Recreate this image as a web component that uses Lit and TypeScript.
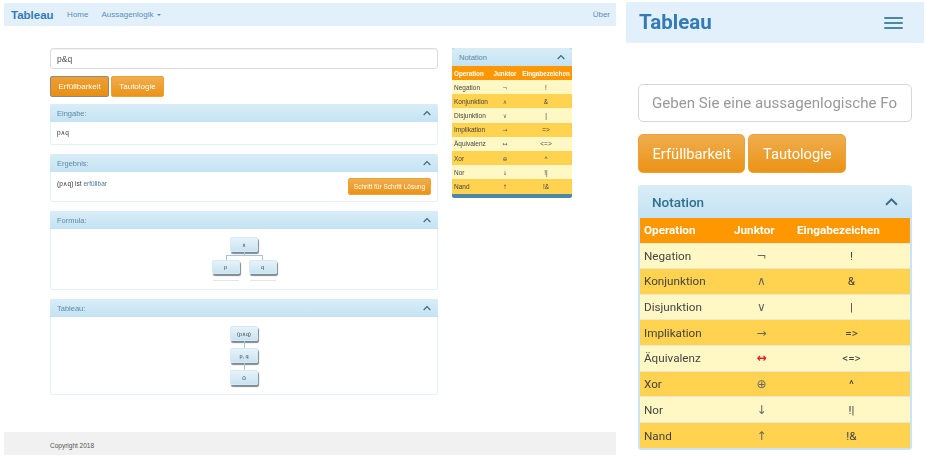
import { LitElement, html, css } from 'lit';
import { customElement } from 'lit/decorators.js';

const NOTATION = [
  ['Negation', '¬', '!'],
  ['Konjunktion', '∧', '&'],
  ['Disjunktion', '∨', '|'],
  ['Implikation', '→', '=>'],
  ['Äquivalenz', '↔', '<=>'],
  ['Xor', '⊕', '^'],
  ['Nor', '↓', '!|'],
  ['Nand', '↑', '!&'],
];

const chevron = html`<svg class="chevron" viewBox="0 0 12 8" aria-hidden="true">
  <path d="M1 7 L6 2 L11 7" fill="none" stroke="currentColor" stroke-width="1.8" />
</svg>`;

@customElement('app-root')
export class AppRoot extends LitElement {
  static styles = css`
    :host {
      display: block;
      width: 925px;
      height: 466px;
      overflow: hidden;
      background: #fff;
      color: #333;
    }

    * {
      box-sizing: border-box;
    }

    .screens {
      display: flex;
      align-items: flex-start;
    }

    input {
      display: block;
      width: 100%;
      font: inherit;
      background: #fff;
      outline: none;
    }

    /* desktop screenshot on the left */
    .desk {
      width: 612px;
      height: 452px;
      margin: 3px 0 0 4px;
      display: flex;
      flex-direction: column;
      font-family: 'Liberation Sans', 'DejaVu Sans', Arial, sans-serif;
      font-size: 7px;
      filter: blur(0.35px);
    }

    .desk-nav {
      height: 23px;
      flex: none;
      background: #e1f0fb;
      display: flex;
      align-items: center;
      padding: 0 6px 0 7px;
      color: #5d8db5;
      font-size: 8px;
    }

    .desk-brand {
      font-size: 11.5px;
      font-weight: 700;
      color: #337ab7;
      margin-right: 13.5px;
    }

    .desk-home {
      margin-right: 13px;
    }

    .caret {
      display: inline-block;
      margin-left: 3px;
      vertical-align: middle;
      border-top: 2px solid currentColor;
      border-left: 2px solid transparent;
      border-right: 2px solid transparent;
    }

    .desk-right {
      margin-left: auto;
    }

    .desk-main {
      flex: 1;
      display: flex;
      align-items: flex-start;
      gap: 14px;
      padding: 22px 0 0 46px;
    }

    .desk-col {
      width: 388px;
      display: flex;
      flex-direction: column;
    }

    .desk-input {
      height: 21px;
      border: 1px solid #dcdcdc;
      border-radius: 3px;
      padding: 0 6px;
      font-size: 8.5px;
      color: #555;
      box-shadow: inset 0 1px 1px rgba(0, 0, 0, 0.05);
    }

    .desk-actions {
      display: flex;
      gap: 2px;
      margin: 7px 0;
    }

    .btn {
      color: #fff;
      background: linear-gradient(#f0ad4e, #eb9316);
      border: 1px solid #eea236;
    }

    .desk-actions .btn {
      height: 21px;
      border-radius: 2px;
      font-size: 8px;
      display: flex;
      align-items: center;
      padding: 0 7px;
    }

    .desk-actions .btn.active {
      padding: 0 7.5px;
      border-color: #8d8a80;
      background: linear-gradient(#ec9f33, #e98f12);
    }

    .panel {
      border: 1px solid #e2f0f7;
      border-radius: 2px;
      background: #fff;
    }

    .desk-col .panel {
      margin-bottom: 9px;
    }

    .panel-head {
      background: linear-gradient(#d9edf7, #c4e3f3);
      color: #5b8aa6;
      display: flex;
      align-items: center;
      justify-content: space-between;
    }

    .desk .panel-head {
      height: 18px;
      padding: 0 7px;
      font-size: 7.5px;
      border-radius: 2px 2px 0 0;
    }

    .desk-col .panel-head {
      margin: -1px -1px 0;
    }

    .chevron {
      color: #3a6a85;
      display: block;
    }

    .desk .chevron {
      width: 8px;
      height: 6px;
    }

    .input-body {
      height: 22px;
      padding: 0 6px;
      display: flex;
      align-items: center;
      font-size: 6.5px;
    }

    .result-body {
      height: 29px;
      padding: 6px 6px;
      display: flex;
      justify-content: space-between;
      align-items: flex-start;
      font-size: 6.5px;
    }

    .result-body span {
      padding-top: 1.5px;
    }

    .result-body em {
      font-style: normal;
      color: #4a7a9c;
    }

    .result-body .btn {
      height: 17px;
      padding: 0 5px;
      border-radius: 2px;
      display: flex;
      align-items: center;
      font-size: 6.5px;
    }

    /* formula and tableau trees */
    .tree {
      display: flex;
      flex-direction: column;
      align-items: center;
    }

    .formula {
      height: 60px;
      padding-top: 8px;
    }

    .tableau {
      height: 77px;
      padding-top: 9px;
    }

    .node {
      height: 14px;
      width: 28px;
      border: 1px solid #d6e9f4;
      border-radius: 2px;
      background: linear-gradient(#e6f3fa, #c9e3f1);
      box-shadow: 1px 2px 1px #7f8a92;
      display: flex;
      align-items: center;
      justify-content: center;
      font-size: 5.5px;
      color: #444;
    }

    .node.top,
    .tableau .node {
      height: 15px;
    }

    .stem {
      width: 1px;
      height: 7px;
      background: #a8c4dc;
    }

    .stem.short {
      height: 3px;
    }

    .fork {
      width: 37px;
      height: 5px;
      border: 1px solid #a8c4dc;
      border-bottom: none;
    }

    .branches {
      display: flex;
      gap: 9px;
    }

    .branch {
      display: flex;
      flex-direction: column;
      align-items: center;
    }

    .leaf-rule {
      width: 26px;
      height: 1px;
      margin-top: 6px;
      background: #e4e4e4;
    }

    .desk-note {
      width: 120px;
      border-radius: 2px;
      background: #4d86a6;
      padding-bottom: 4.4px;
      overflow: hidden;
    }

    table {
      border-collapse: collapse;
      width: 100%;
      table-layout: fixed;
    }

    th {
      background: #ff9800;
      color: #fff;
      font-weight: 700;
      white-space: nowrap;
    }

    td {
      color: #444;
      text-align: center;
    }

    td:first-child,
    th:first-child {
      text-align: left;
    }

    tr:nth-child(odd) td {
      background: #fff8c4;
    }

    tr:nth-child(even) td {
      background: #ffd24f;
    }

    td.sign {
      font-family: 'DejaVu Sans', sans-serif;
      color: #666;
    }

    .desk-note th {
      height: 14px;
      padding: 0;
      font-size: 6.3px;
      text-align: center;
    }

    .desk-note td {
      height: 14.2px;
      padding: 0;
      font-size: 6.5px;
    }

    .desk-note td.sign {
      font-size: 6px;
    }

    .desk-note td:first-child,
    .desk-note th:first-child {
      padding-left: 2px;
      text-align: left;
    }

    .desk-note col.op {
      width: 38px;
    }

    .desk-note col.junktor {
      width: 30px;
    }

    .desk-foot {
      height: 23px;
      flex: none;
      background: #f1f1f1;
      display: flex;
      align-items: center;
      padding: 3px 0 0 46px;
      font-size: 6.5px;
      color: #555;
    }

    /* phone screenshot on the right */
    .phone {
      width: 298px;
      margin: 2px 0 0 10px;
      font-family: Roboto, 'DejaVu Sans', sans-serif;
      filter: blur(0.25px);
    }

    .phone-nav {
      height: 41px;
      background: #e1f0fb;
      display: flex;
      align-items: center;
      justify-content: space-between;
      padding: 0 21px 0 13px;
      color: #337ab7;
    }

    .phone-brand {
      font-size: 20.5px;
      font-weight: 700;
      margin-top: -2px;
    }

    .burger {
      width: 19px;
      height: 12px;
      display: flex;
      flex-direction: column;
      justify-content: space-between;
    }

    .burger i {
      height: 2px;
      background: #4a87a8;
      border-radius: 1px;
    }

    .phone-main {
      padding: 41px 12px 0;
    }

    .phone-input {
      height: 38px;
      border: 1px solid #d6d6d6;
      border-radius: 5px;
      padding: 0 14px 0 13px;
      font-size: 15.1px;
    }

    .phone-input::placeholder {
      color: #999;
      opacity: 1;
    }

    .phone-actions {
      display: flex;
      gap: 3px;
      margin: 12px 0;
    }

    .phone-actions .btn {
      height: 39px;
      border-radius: 5px;
      font-size: 14.7px;
      display: flex;
      align-items: center;
      padding: 0 13.5px;
    }

    .phone-note {
      border: 2px solid #c9e4f2;
      border-top: none;
      border-radius: 4px;
      margin-bottom: 1px;
    }

    .phone-note .panel-head {
      height: 33px;
      margin: 0 -2px;
      padding: 0 14px;
      font-size: 13.5px;
      font-weight: 500;
      color: #31708f;
      border-radius: 4px 4px 0 0;
    }

    .phone-note .chevron {
      width: 13px;
      height: 9px;
    }

    .phone-note th {
      height: 25px;
      padding: 0 0 0 4px;
      font-size: 11.7px;
      text-align: left;
    }

    .phone-note td {
      height: 25.67px;
      padding: 0;
      font-size: 11.7px;
      border-top: 1px solid #ece8cf;
    }

    .phone-note td:first-child {
      padding-left: 4px;
    }

    .phone-note td.sign {
      font-size: 12px;
    }

    .phone-note col.op {
      width: 90px;
    }

    .phone-note col.junktor {
      width: 63px;
    }

    .phone-note td.equiv {
      color: #ee1c25;
      font-weight: 700;
    }
  `;

  private renderTable(markEquivalence: boolean) {
    return html`<table>
      <colgroup>
        <col class="op" />
        <col class="junktor" />
        <col />
      </colgroup>
      <thead>
        <tr>
          <th>Operation</th>
          <th>Junktor</th>
          <th>Eingabezeichen</th>
        </tr>
      </thead>
      <tbody>
        ${NOTATION.map(
          ([op, sign, input]) => html`<tr>
            <td>${op}</td>
            <td class="sign ${markEquivalence && sign === '↔' ? 'equiv' : ''}">${sign}</td>
            <td>${input}</td>
          </tr>`
        )}
      </tbody>
    </table>`;
  }

  private renderDesktop() {
    return html`<section class="desk">
      <nav class="desk-nav">
        <span class="desk-brand">Tableau</span>
        <span class="desk-home">Home</span>
        <span>Aussagenlogik<i class="caret"></i></span>
        <span class="desk-right">Über</span>
      </nav>
      <div class="desk-main">
        <div class="desk-col">
          <input class="desk-input" value="p&q" />
          <div class="desk-actions">
            <div class="btn active">Erfüllbarkeit</div>
            <div class="btn">Tautologie</div>
          </div>
          <div class="panel">
            <div class="panel-head">Eingabe:${chevron}</div>
            <div class="input-body">p∧q</div>
          </div>
          <div class="panel">
            <div class="panel-head">Ergebnis:${chevron}</div>
            <div class="result-body">
              <span>(p∧q) ist <em>erfüllbar</em></span>
              <div class="btn">Schritt für Schritt Lösung</div>
            </div>
          </div>
          <div class="panel">
            <div class="panel-head">Formula:${chevron}</div>
            <div class="tree formula">
              <div class="node top">∧</div>
              <div class="stem short"></div>
              <div class="fork"></div>
              <div class="branches">
                <div class="branch"><div class="node">p</div><div class="leaf-rule"></div></div>
                <div class="branch"><div class="node">q</div><div class="leaf-rule"></div></div>
              </div>
            </div>
          </div>
          <div class="panel">
            <div class="panel-head">Tableau:${chevron}</div>
            <div class="tree tableau">
              <div class="node">(p∧q)</div>
              <div class="stem"></div>
              <div class="node">p, q</div>
              <div class="stem"></div>
              <div class="node">⊙</div>
            </div>
          </div>
        </div>
        <aside class="desk-note">
          <div class="panel-head">Notation${chevron}</div>
          ${this.renderTable(false)}
        </aside>
      </div>
      <footer class="desk-foot">Copyright 2018</footer>
    </section>`;
  }

  private renderPhone() {
    return html`<section class="phone">
      <nav class="phone-nav">
        <span class="phone-brand">Tableau</span>
        <div class="burger"><i></i><i></i><i></i></div>
      </nav>
      <div class="phone-main">
        <input class="phone-input" placeholder="Geben Sie eine aussagenlogische Formel ein" />
        <div class="phone-actions">
          <div class="btn">Erfüllbarkeit</div>
          <div class="btn">Tautologie</div>
        </div>
        <div class="phone-note">
          <div class="panel-head">Notation${chevron}</div>
          ${this.renderTable(true)}
        </div>
      </div>
    </section>`;
  }

  render() {
    return html`<div class="screens">${this.renderDesktop()}${this.renderPhone()}</div>`;
  }
}

declare global {
  interface HTMLElementTagNameMap {
    'app-root': AppRoot;
  }
}
